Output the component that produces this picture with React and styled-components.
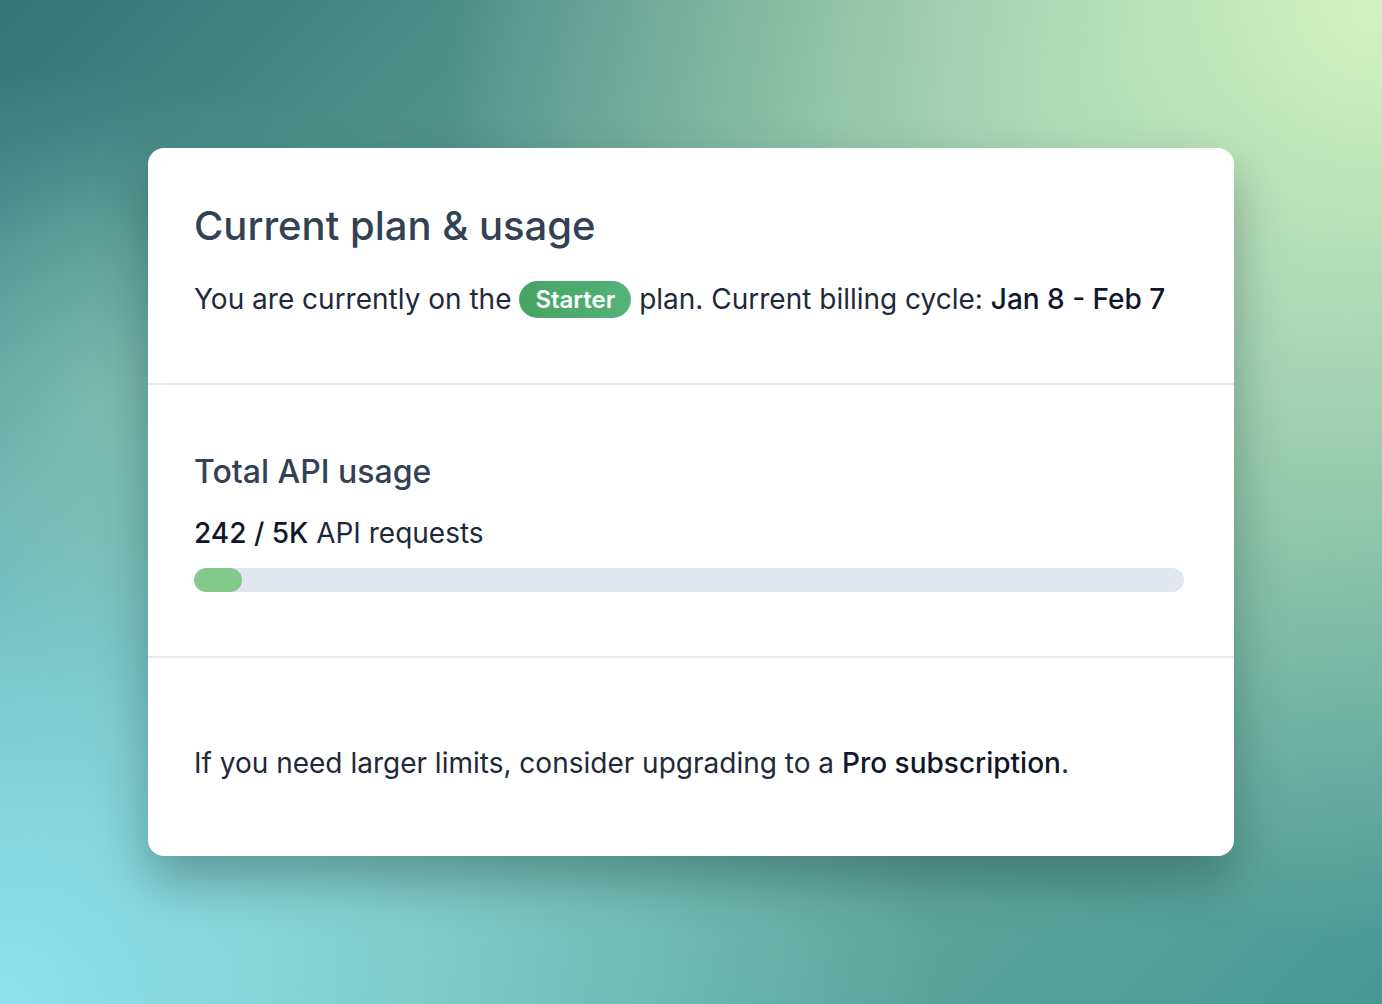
import React from "react";
import styled, { createGlobalStyle } from "styled-components";

const GlobalStyle = createGlobalStyle`
  html, body {
    margin: 0;
    padding: 0;
  }
  body {
    font-family: Inter, "Noto Sans", sans-serif;
  }
`;

const Page = styled.div`
  min-height: 100vh;
  display: flex;
  align-items: center;
  justify-content: center;
  background:
    radial-gradient(ellipse 180px 260px at 8% 40%, rgba(170, 215, 175, 0.35), transparent 100%),
    radial-gradient(circle at 100% 0%, #d4f2c2 0%, rgba(212, 242, 194, 0) 55%),
    radial-gradient(circle at 0% 100%, #8ee2ec 0%, rgba(142, 226, 236, 0) 55%),
    linear-gradient(135deg, #357377 0%, #72b3a2 50%, #489896 100%);
`;

const Card = styled.div`
  width: 1086px;
  background: #ffffff;
  border-radius: 16px;
  box-shadow: 0 24px 48px rgba(20, 50, 45, 0.35);
  overflow: hidden;
`;

const Section = styled.section`
  padding: ${(p) => p.$pad || "46px"};
  border-top: ${(p) => (p.$first ? "none" : "2px solid #e5e9ef")};
`;

const Title = styled.h1`
  margin: 0;
  font-size: 40px;
  font-weight: 500;
  line-height: 48px;
  color: #334155;
`;

const Subtitle = styled.h2`
  margin: 0;
  font-size: 32px;
  font-weight: 500;
  line-height: 40px;
  color: #334155;
`;

const Text = styled.p`
  margin: ${(p) => p.$mt || "0"} 0 0;
  font-size: 28px;
  line-height: ${(p) => p.$lh || "36px"};
  color: #1e293b;
`;

const Strong = styled.span`
  font-weight: 500;
  color: #0f172a;
`;

const Badge = styled.span`
  display: inline-block;
  padding: 0 16px;
  height: 37px;
  line-height: 37px;
  border-radius: 19px;
  background: linear-gradient(90deg, #46a462, #55b27a);
  color: #ffffff;
  font-weight: 600;
  font-size: 24px;
  vertical-align: middle;
  position: relative;
  top: -2px;
`;

const Track = styled.div`
  margin-top: 17px;
  height: 24px;
  border-radius: 12px;
  background: #e2e7ef;
  overflow: hidden;
`;

const Fill = styled.div`
  height: 100%;
  border-radius: 12px;
  background: #82c98a;
`;

export default function App() {
  const used = 242;
  const limit = 5000;
  return (
    <>
      <GlobalStyle />
      <Page>
        <Card>
          <Section $first $pad="54px 46px 63px">
            <Title>Current plan &amp; usage</Title>
            <Text $mt="30px" $lh="38px">
              You are currently on the <Badge>Starter</Badge> plan. Current billing cycle:{" "}
              <Strong>Jan 8 - Feb 7</Strong>
            </Text>
          </Section>
          <Section $pad="67px 50px 64px 46px">
            <Subtitle>Total API usage</Subtitle>
            <Text $mt="23px">
              <Strong>242 / 5K</Strong> API requests
            </Text>
            <Track>
              <Fill style={{ width: `${Math.max((used / limit) * 100, 4.85)}%` }} />
            </Track>
          </Section>
          <Section $pad="87px 46px 75px">
            <Text>
              If you need larger limits, consider upgrading to a <Strong>Pro subscription</Strong>.
            </Text>
          </Section>
        </Card>
      </Page>
    </>
  );
}
